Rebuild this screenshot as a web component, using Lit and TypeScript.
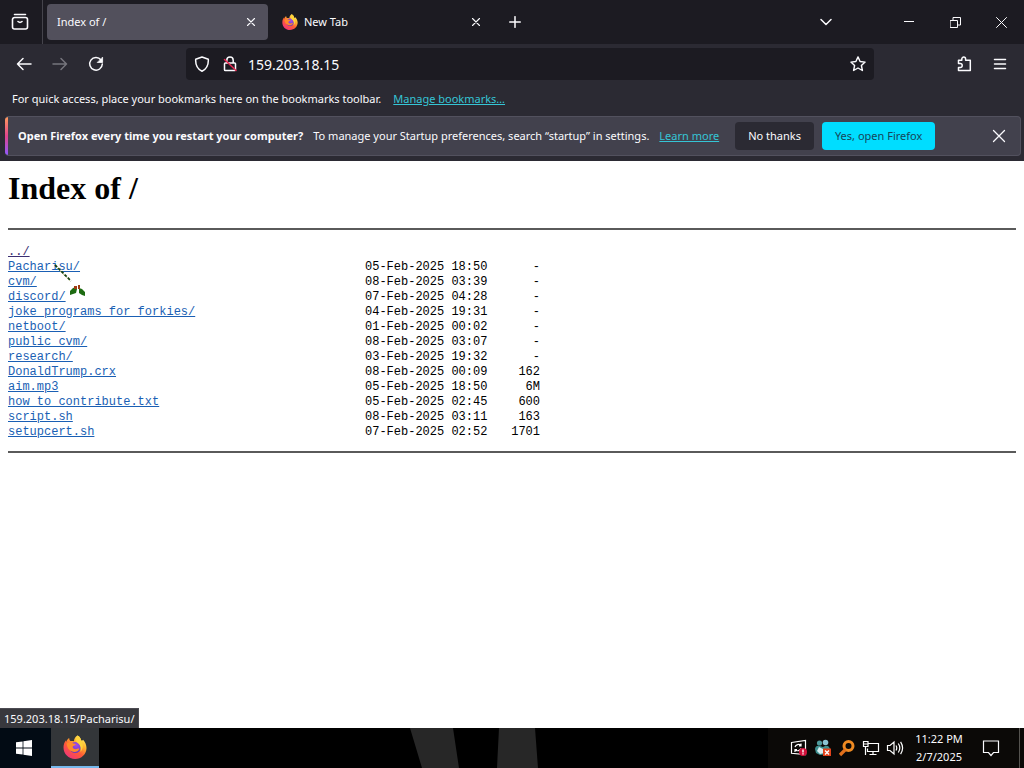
import { LitElement, html, svg, css } from "lit";
import { customElement } from "lit/decorators.js";

interface Entry {
  name: string;
  date: string;
  size: string;
}

const ENTRIES: Entry[] = [
  { name: "../", date: "", size: "" },
  { name: "Pacharisu/", date: "05-Feb-2025 18:50", size: "-" },
  { name: "cvm/", date: "08-Feb-2025 03:39", size: "-" },
  { name: "discord/", date: "07-Feb-2025 04:28", size: "-" },
  { name: "joke_programs_for_forkies/", date: "04-Feb-2025 19:31", size: "-" },
  { name: "netboot/", date: "01-Feb-2025 00:02", size: "-" },
  { name: "public_cvm/", date: "08-Feb-2025 03:07", size: "-" },
  { name: "research/", date: "03-Feb-2025 19:32", size: "-" },
  { name: "DonaldTrump.crx", date: "08-Feb-2025 00:09", size: "162" },
  { name: "aim.mp3", date: "05-Feb-2025 18:50", size: "6M" },
  { name: "how_to_contribute.txt", date: "05-Feb-2025 02:45", size: "600" },
  { name: "script.sh", date: "08-Feb-2025 03:11", size: "163" },
  { name: "setupcert.sh", date: "07-Feb-2025 02:52", size: "1701" },
];

const icon = (size: number, body: unknown) => html`<svg
  class="icon"
  width=${size}
  height=${size}
  viewBox="0 0 ${size} ${size}"
  aria-hidden="true"
>${body}</svg>`;

const closeSmall = icon(10, svg`<path stroke-width="1.100" d="M1.500 1.500l7 7M8.500 1.500l-7 7" />`);

const firefox = (size: number) => html`<svg class="logo" width=${size} height=${size} viewBox="0 0 24 24" aria-hidden="true">
  <defs>
    <linearGradient id="ff-body" x1="0.85" y1="0.05" x2="0.2" y2="0.95">
      <stop offset="0" stop-color="#fff36b" />
      <stop offset="0.3" stop-color="#ffb52c" />
      <stop offset="0.6" stop-color="#ff5b36" />
      <stop offset="1" stop-color="#f0357a" />
    </linearGradient>
    <radialGradient id="ff-globe" cx="0.6" cy="0.3" r="0.8">
      <stop offset="0" stop-color="#a34bea" />
      <stop offset="1" stop-color="#5a39b8" />
    </radialGradient>
  </defs>
  <path fill="url(#ff-body)" d="M14.5 0.5c2.6 1.3 3.4 3.5 3.7 5.1 1.4-.1 1.9-.9 1.9-.9 2 2.2 3.4 5 3.4 8.2C23.5 19 18.4 24 12 24S.5 19 .5 12.600c0-3.400 1.200-5.600 2.300-7.300 0 .8.100 1.400.300 1.800.6-1.600 1.600-3 3.100-4 0 1.400.4 2.200 1.300 3 1.300-.3 2.400-.2 3.500.200C11 4 12.300 1.700 14.500.5z" />
  <circle cx="12.200" cy="12.500" r="5.600" fill="url(#ff-globe)" />
  <path fill="#ff8a2b" d="M3.500 8.500c2.500-1.800 5-1.300 6.800.1 1 .2 2 .4 2.600.5-.2 1.200-1.500 1.500-2.800 2-.9.900-.3 2.600 1.500 3 2.200.4 3.500-.9 4.800-.4-1.200 2.800-4.300 3.800-7.200 2.900C5.900 15.500 3.900 12.500 3.500 8.500z" />
  <path fill="#ffd43c" d="M14.500.5c2.600 1.300 3.400 3.500 3.700 5.100 2.300 3.200 2.200 8.400-.7 11.400 1-4.700-.5-7.300-3.100-9.200-1.900-1.700-1.800-4.800.1-7.300z" />
</svg>`;

@customElement("app-root")
export class AppRoot extends LitElement {
  static styles = css`
    :host {
      display: block;
      font-family: "Noto Sans", "Open Sans", sans-serif;
      font-size: 11px;
      line-height: 16px;
      color: #fbfbfe;
    }
    * {
      box-sizing: border-box;
    }
    button,
    input {
      font: inherit;
      color: inherit;
      border: 0;
      background: none;
      padding: 0;
      margin: 0;
      outline: 0;
    }
    button {
      display: inline-flex;
      align-items: center;
      justify-content: center;
      flex: none;
    }
    svg {
      display: block;
      flex: none;
    }
    .icon {
      fill: none;
      stroke: currentColor;
      stroke-width: 1.3;
      stroke-linecap: round;
      stroke-linejoin: round;
    }
    .desktop {
      display: flex;
      flex-direction: column;
      min-height: 100vh;
      background: #fff;
    }
    .chrome {
      background: #2b2a33;
      padding-bottom: 5px;
    }
    .tabs {
      display: flex;
      align-items: center;
      height: 44px;
      background: #1c1b22;
    }
    .view {
      width: 43px;
      height: 44px;
      padding-right: 3px;
      border-right: 1px solid #45444c;
    }
    .tab {
      display: flex;
      align-items: center;
      gap: 6px;
      width: 221px;
      height: 36px;
      margin-left: 4px;
      padding: 0 10px;
      border-radius: 4px;
    }
    .tab.active {
      background: #52505c;
    }
    .tab-title {
      flex: 1;
    }
    .tab-close {
      width: 14px;
      height: 20px;
    }
    .new-tab {
      width: 32px;
      height: 32px;
      margin-left: 6px;
    }
    .win {
      display: flex;
      margin-left: auto;
      align-items: center;
    }
    .win button {
      width: 46px;
      height: 44px;
    }
    .win .list {
      margin-right: 37px;
    }
    .nav {
      display: flex;
      align-items: center;
      height: 40px;
      padding: 0 6px;
    }
    .nav button {
      width: 36px;
      height: 32px;
    }
    .nav .off {
      color: #76757d;
    }
    .urlbar {
      display: flex;
      align-items: center;
      flex: 1;
      height: 32px;
      margin: 0 72px;
      border-radius: 4px;
      background: #1c1b22;
    }
    .urlbar button {
      width: 28px;
    }
    .urlbar .shield {
      margin-left: 2px;
    }
    .urlbar .star {
      width: 32px;
    }
    .urlbar input {
      flex: 1;
      min-width: 0;
      padding: 1px 0 0 4px;
      font-size: 14px;
    }
    .bookmarks {
      display: flex;
      gap: 12px;
      padding: 7px 12px 9px;
    }
    a {
      color: #35c5d6;
    }
    .notice {
      display: flex;
      align-items: center;
      min-height: 40px;
      margin: 0 3px 0 5px;
      padding-right: 5px;
      border: 1px solid #52515e;
      border-left: 0;
      border-radius: 4px;
      background: #42414d;
      overflow: hidden;
    }
    .stripe {
      align-self: stretch;
      width: 3px;
      margin-right: 10px;
      background: linear-gradient(#ff9a5c, #e0458c 50%, #9059ff);
    }
    .notice p {
      display: flex;
      gap: 10px;
      margin: 0;
    }
    .notice .act {
      height: 28px;
      margin-left: 8px;
      padding: 0 13px;
      border-radius: 4px;
      background: #2b2a33;
    }
    .notice .first {
      margin-left: 16px;
    }
    .notice .primary {
      background: #00ddff;
      color: #17455a;
    }
    .notice .dismiss {
      width: 32px;
      height: 32px;
      margin-left: auto;
    }
    .page {
      flex: 1;
      padding: 9px 8px;
      color: #000;
    }
    h1 {
      margin: 0 0 21px;
      font: bold 32px/37px "Liberation Serif", serif;
    }
    hr {
      height: 2px;
      margin: 0;
      border: 0;
      background: #5a5a5a;
    }
    table {
      margin: 15px 0 11px;
      border-collapse: collapse;
      font: 12px/15px "Liberation Mono", monospace;
    }
    td {
      padding: 0;
      height: 15px;
      text-align: left;
      white-space: pre;
    }
    .c-name {
      width: 357px;
    }
    .c-date {
      width: 133px;
    }
    .c-size {
      width: 42px;
    }
    td.size {
      text-align: right;
    }
    td a {
      color: #1a5fb4;
    }
    td .parent {
      color: #3b2f72;
    }
    .status {
      align-self: flex-start;
      height: 20px;
      padding: 2px 4px;
      border: 1px solid #4c4b52;
      border-width: 1px 1px 0 0;
      background: #38383d;
    }
    .taskbar {
      display: flex;
      align-items: stretch;
      height: 40px;
      background: #000;
    }
    .start {
      width: 51px;
      padding-right: 3px;
      background: #020b14;
    }
    .app {
      width: 48px;
      background: #333639;
      border-bottom: 2px solid #76b9ed;
    }
    .wall {
      flex: 1;
      display: flex;
      justify-content: center;
      padding-left: 82px;
    }
    .tray {
      display: flex;
      align-items: center;
      gap: 6px;
      padding-left: 22px;
      background: #0b0907;
    }
    .clock {
      width: 48px;
      margin-left: 5px;
      text-align: center;
      line-height: 18px;
      white-space: nowrap;
    }
    .tray .action {
      width: 44px;
      height: 40px;
    }
    .peek {
      align-self: stretch;
      width: 5px;
      border-left: 1px solid #55534f;
    }
    .cursor {
      position: absolute;
      left: 54px;
      top: 264px;
      pointer-events: none;
    }
  `;

  private tabStrip() {
    return html`<header class="tabs">
      <button class="view" aria-label="Firefox View">
        ${icon(18, svg`<path stroke-width="1.600" d="M3.500 1.500h11M3.500 4.500h11a2 2 0 0 1 2 2v7.500a2 2 0 0 1-2 2h-11a2 2 0 0 1-2-2V6.500a2 2 0 0 1 2-2zM7 8.500q2 1.800 4 0" />`)}
      </button>
      <div class="tab active">
        <span class="tab-title">Index of /</span>
        <button class="tab-close" aria-label="Close tab">${closeSmall}</button>
      </div>
      <div class="tab">
        ${firefox(16)}
        <span class="tab-title">New Tab</span>
        <button class="tab-close" aria-label="Close tab">${closeSmall}</button>
      </div>
      <button class="new-tab" aria-label="New tab">${icon(12, svg`<path stroke-width="1.500" d="M6 .7v10.600M.7 6h10.600" />`)}</button>
      <div class="win">
        <button class="list" aria-label="List all tabs">${icon(12, svg`<path stroke-width="1.500" d="M1 3.500l5 5 5-5" />`)}</button>
        <button aria-label="Minimize">${icon(10, svg`<path stroke-width="1" stroke-linecap="butt" d="M0 4.500h10" />`)}</button>
        <button aria-label="Restore">${icon(11, svg`<path stroke-width="1" stroke-linejoin="miter" d="M.5 3.500h7v7h-7zM3 3V.5h7.500v7.500H8" />`)}</button>
        <button aria-label="Close">${icon(11, svg`<path stroke-width="1" d="M.5.5l10 10M10.500.5l-10 10" />`)}</button>
      </div>
    </header>`;
  }

  private navBar() {
    return html`<nav class="nav">
      <button aria-label="Back">${icon(16, svg`<path stroke-width="1.500" d="M15 8H1.500M7 2.500L1.500 8 7 13.500" />`)}</button>
      <button class="off" aria-label="Forward">${icon(16, svg`<path stroke-width="1.500" d="M1 8h13.500M9 2.500L14.500 8 9 13.500" />`)}</button>
      <button aria-label="Reload">${icon(16, svg`<path stroke-width="1.500" d="M13 4A6.300 6.300 0 1 0 14.300 8" /><path fill="currentColor" stroke-width=".8" d="M14.600 1.500v5h-5z" />`)}</button>
      <div class="urlbar">
        <button class="shield" aria-label="Tracking protection">${icon(16, svg`<path stroke-width="1.500" d="M8 1l6.300 2.300c.3 5-1 9.500-6.300 11.900C2.700 12.800 1.400 8.300 1.700 3.300z" />`)}</button>
        <button aria-label="Connection is not secure">${icon(16, svg`<path stroke-width="1.500" d="M4.800 7V4.200a3.200 3.200 0 0 1 6.400 0V7M3.300 7h9.400a.8.8 0 0 1 .8.800v6a.8.8 0 0 1-.8.800H3.300a.8.8 0 0 1-.8-.8v-6a.8.8 0 0 1 .8-.8z" /><path stroke="#e22850" stroke-width="1.600" d="M2.500 3.500l11.500 11" />`)}</button>
        <input type="text" aria-label="Address" .value=${"159.203.18.15"} />
        <button class="star" aria-label="Bookmark this page">${icon(16, svg`<path stroke-width="1.400" d="M8 .9l2.100 4.600 5 .6-3.700 3.400 1 5L8 12l-4.400 2.500 1-5L.9 6.100l5-.6z" />`)}</button>
      </div>
      <button aria-label="Extensions">${icon(16, svg`<path stroke-width="1.500" d="M2.500 7.500V4.300h3.300V3a1.900 1.900 0 0 1 3.800 0v1.300h4.700v10.200H2.500v-3h1.700a2 2 0 0 0 0-4z" />`)}</button>
      <button aria-label="Menu">${icon(14, svg`<path stroke-width="1.500" d="M1.500 2.500h11M1.500 7h11M1.500 11.500h11" />`)}</button>
    </nav>`;
  }

  private tray() {
    return html`<div class="tray">
      <svg width="18" height="18" viewBox="0 0 18 18" aria-hidden="true">
        <path fill="none" stroke="#fff" stroke-width="1.200" d="M1.500 3.500L15.500 1.500v14l-14-1.200z" />
        <path fill="none" stroke="#fff" stroke-width="1.200" d="M5 8a3.600 3.600 0 0 1 6-1.500M11 4.500v2.300H9M11 9.500A3.600 3.600 0 0 1 5.500 11M5 13v-2.300h2" />
        <circle cx="13" cy="13" r="4" fill="#d3123c" />
        <path stroke="#fff" stroke-width="1.400" d="M13 10.500v3M13 14.300v1.200" />
      </svg>
      <svg width="18" height="18" viewBox="0 0 18 18" aria-hidden="true">
        <circle cx="5.500" cy="4" r="2.600" fill="#4f9a9c" />
        <circle cx="11.500" cy="3.500" r="2.800" fill="#8bc4d2" />
        <path fill="#3d8f8e" d="M1 10c0-3 3-4 5-3l3 1 2-1c3-1 5 1 5 4l-3 4-7 1-4-2z" />
        <path fill="#d5eef2" d="M5 8l4 2 1 4-4 1-3-3z" />
        <path fill="#e2421b" d="M9 9.500h8v7.500H9z" />
        <path stroke="#fff" stroke-width="1.400" d="M11 11.500l4 4M15 11.500l-4 4" />
      </svg>
      <svg width="18" height="18" viewBox="0 0 18 18" aria-hidden="true">
        <circle cx="10.500" cy="7" r="4.500" fill="none" stroke="#ef8a22" stroke-width="3" />
        <path stroke="#e2701c" stroke-width="3.200" d="M7.500 10.500L2 16" />
      </svg>
      <svg width="18" height="18" viewBox="0 0 18 18" fill="none" stroke="#fff" stroke-width="1.200" aria-hidden="true">
        <path d="M6.500 4.500h10v8h-11V9.500M11 12.500v3M7.500 15.500h7M1.500 2.500h4.500v5H1.500zM3.500 7.500v8.500M1.500 5h4.500" />
      </svg>
      <svg width="18" height="18" viewBox="0 0 18 18" fill="none" stroke="#fff" stroke-width="1.200" aria-hidden="true">
        <path d="M1.500 6.500h2.500l4-3.500v12l-4-3.500H1.500zM10 6.500q1.500 2.500 0 5M12.300 4.500q3 4.500 0 9M14.600 2.800q4 6.200 0 12.400" />
      </svg>
      <div class="clock"><div>11:22 PM</div><div>2/7/2025</div></div>
      <button class="action" aria-label="Notifications">
        ${icon(18, svg`<path stroke-width="1.200" stroke-linejoin="miter" d="M1.500 2h15v11.500h-5L9 16.500l-2.500-3h-5z" />`)}
      </button>
      <div class="peek"></div>
    </div>`;
  }

  render() {
    return html`<div class="desktop">
      <div class="chrome">
        ${this.tabStrip()} ${this.navBar()}
        <div class="bookmarks">
          <span>For quick access, place your bookmarks here on the bookmarks toolbar.</span>
          <a href="#bookmarks">Manage bookmarks…</a>
        </div>
        <div class="notice" role="alert">
          <div class="stripe"></div>
          <p>
            <b>Open Firefox every time you restart your computer?</b>
            <span>To manage your Startup preferences, search “startup” in settings.</span>
            <a href="#learn">Learn more</a>
          </p>
          <button class="act first">No thanks</button>
          <button class="act primary">Yes, open Firefox</button>
          <button class="dismiss" aria-label="Dismiss">${icon(14, svg`<path d="M1.500 1.500l11 11M12.500 1.500l-11 11" />`)}</button>
        </div>
      </div>
      <main class="page">
        <h1>Index of /</h1>
        <hr />
        <table>
          <colgroup>
            <col class="c-name" />
            <col class="c-date" />
            <col class="c-size" />
          </colgroup>
          <tbody>
            ${ENTRIES.map(
              (e) => html`<tr>
                <td><a class=${e.date ? "entry" : "parent"} href=${"#" + e.name}>${e.name}</a></td>
                <td>${e.date}</td>
                <td class="size">${e.size}</td>
              </tr>`
            )}
          </tbody>
        </table>
        <hr />
      </main>
      <div class="status">159.203.18.15/Pacharisu/</div>
      <footer class="taskbar">
        <button class="start" aria-label="Start">
          <svg width="16" height="16" viewBox="0 0 16 16" fill="#fff" aria-hidden="true">
            <path d="M0 2.300L6.600 1.400v6.200H0zM7.400 1.300L16 0v7.600H7.400zM0 8.400h6.600v6.200L0 13.700zM7.400 8.400H16V16l-8.600-1.300z" />
          </svg>
        </button>
        <button class="app" aria-label="Firefox">${firefox(24)}</button>
        <div class="wall">
          <svg width="130" height="40" viewBox="0 0 130 40" fill="#272727" aria-hidden="true">
            <path d="M0 0h43l6 40H12zM89 0h36l3 40H87z" />
          </svg>
        </div>
        ${this.tray()}
      </footer>
      <svg class="cursor" width="34" height="34" viewBox="0 0 34 34" aria-hidden="true">
        <path stroke="#15400f" stroke-width="1.800" stroke-dasharray="3 1.500" d="M1 1l16 16" />
        <path stroke="#b9b04a" stroke-width="1" stroke-dasharray="1 3.500" d="M3 4l13 13" />
        <path fill="#1d6b12" d="M16 31v-4l3-3 3-1 1 2-1 4-3 1zM25 24l3 1 3 3v4l-3-1-3-2z" />
        <path fill="#a03c14" d="M20 22h3v3h-3zM24 21h2v4h-2z" />
      </svg>
    </div>`;
  }
}
